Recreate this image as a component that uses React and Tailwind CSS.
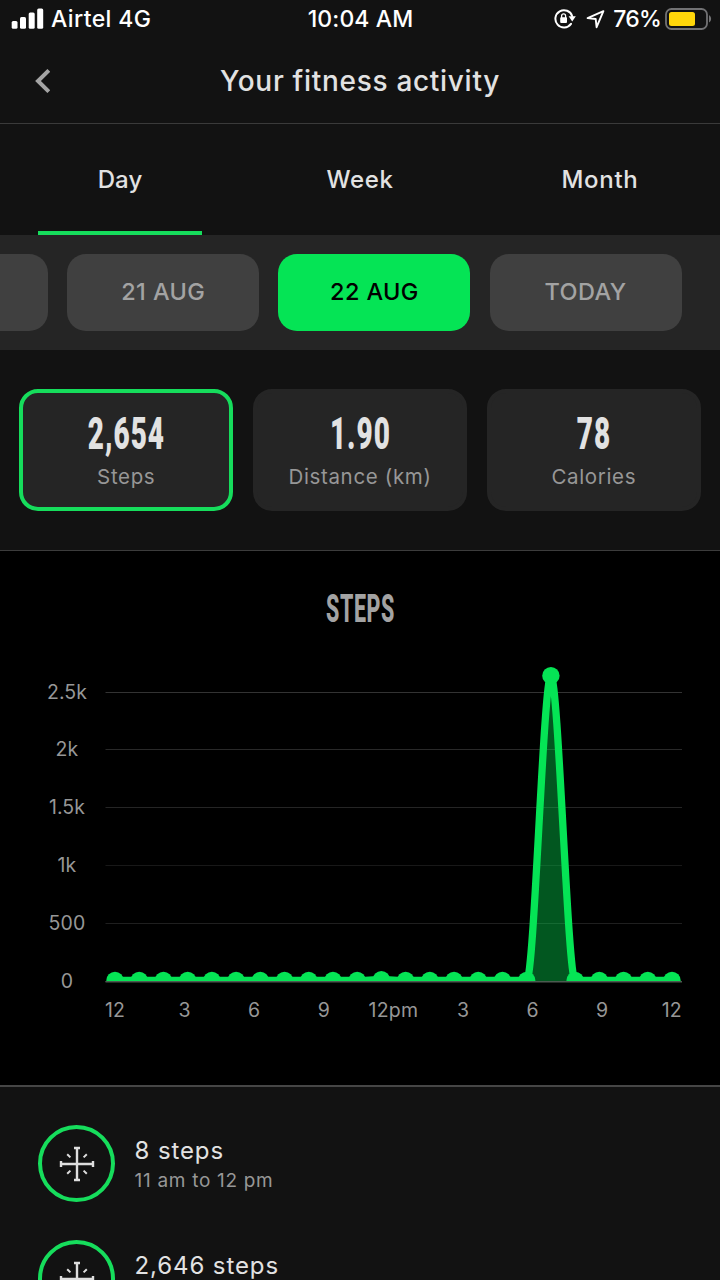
const TABS = [
  { label: 'Day', active: true, tracking: 'tracking-[0.1px]' },
  { label: 'Week', tracking: 'tracking-[0.6px]' },
  { label: 'Month', tracking: 'tracking-[0.7px]' },
];

const DATES = [
  { label: '' },
  { label: '21 AUG' },
  { label: '22 AUG', active: true },
  { label: 'TODAY' },
];

const STATS = [
  { value: '2,654', label: 'Steps', active: true },
  { value: '1.90', label: 'Distance (km)' },
  { value: '78', label: 'Calories' },
];

const ENTRIES = [
  { steps: '8 steps', time: '11 am to 12 pm' },
  { steps: '2,646 steps' },
];

const HOURLY = Array.from({ length: 24 }, (_, i) => (i === 11 ? 8 : i === 18 ? 2646 : 0));
const Y_TICKS = [
  { label: '2.5k', y: 141, stroke: '#333333' },
  { label: '2k', y: 198.5, stroke: '#292929' },
  { label: '1.5k', y: 256.5, stroke: '#252525' },
  { label: '1k', y: 314, stroke: '#181818' },
  { label: '500', y: 372, stroke: '#1f1f1f' },
  { label: '0', y: 430, stroke: '#3c4a40' },
];
const X_TICKS = ['12', '3', '6', '9', '12pm', '3', '6', '9', '12'];

function StatusBar() {
  return (
    <div className="flex h-[38px] items-center justify-between pl-[11px] pr-[8px] text-[23px] font-[450] text-white">
      <div className="flex w-[230px] items-center">
        <svg className="mr-[7px]" width="33" height="22" viewBox="0 0 33 22" fill="#fff">
          <rect x="0.7" y="13.1" width="5.8" height="7.7" rx="1.5" />
          <rect x="9" y="9.1" width="6" height="11.7" rx="1.5" />
          <rect x="17.7" y="4.5" width="6" height="16.3" rx="1.5" />
          <rect x="26.2" y="0.5" width="6" height="20.3" rx="1.5" />
        </svg>
        <span className="tracking-[0.4px]">Airtel 4G</span>
      </div>
      <span className="pr-[2px] tracking-[0.1px]">10:04 AM</span>
      <div className="flex w-[230px] items-center justify-end">
        <svg className="mr-[10px]" width="22" height="20" viewBox="0 0 22 20" fill="none">
          <path d="M17 14.8 A8.6 8.6 0 1 1 18.2 7.2" stroke="#fff" strokeWidth="2" strokeLinecap="round" />
          <path d="M14.6 7.2 H21.8 L18.2 12.4 Z" fill="#fff" />
          <rect x="6.2" y="8.2" width="6.8" height="5.8" rx="0.9" fill="#fff" />
          <path d="M7.6 9 V6.9 A2 2 0 0 1 11.6 6.9 V9" stroke="#fff" strokeWidth="1.3" />
        </svg>
        <svg className="mr-[8px]" width="19" height="20" viewBox="0 0 19 20" fill="none" stroke="#fff" strokeWidth="1.9" strokeLinejoin="round">
          <path d="M17.4 2.2 L1.6 9.1 L9.7 10 L10.6 18.2 Z" />
        </svg>
        <span className="mr-[4px] tracking-[-0.8px]">76%</span>
        <svg width="47" height="22" viewBox="0 0 47 22" fill="none">
          <rect x="1" y="1" width="41" height="20" rx="5.5" stroke="#727274" strokeWidth="1.8" />
          <rect x="4" y="4" width="26" height="14" rx="2.5" fill="#ffd60a" />
          <path d="M44 7.3 C46.8 8.5 46.8 13.3 44 14.5 Z" fill="#727274" />
        </svg>
      </div>
    </div>
  );
}

function Header() {
  return (
    <header className="flex h-[86px] items-center border-b border-[#3a3a3a] px-[35px]">
      <svg width="15" height="24" viewBox="0 0 15 24" fill="none" stroke="#a4a4a4" strokeWidth="4">
        <path d="M13.8 1.4 L3 12 L13.8 22.6" />
      </svg>
      <h1 className="flex-1 text-center text-[28px] font-[450] tracking-[0.7px] text-[#e2e2e2]">Your fitness activity</h1>
      <span className="w-[15px]" />
    </header>
  );
}

function Tabs() {
  return (
    <nav className="grid h-[111px] grid-cols-3">
      {TABS.map((tab) => (
        <div key={tab.label} className={`relative flex items-center justify-center pt-px text-[24px] font-[450] text-[#e2e2e2] ${tab.tracking}`}>
          {tab.label}
          {tab.active && <span className="absolute bottom-0 left-[38px] h-[4px] w-[164px] bg-[#16dd5c]" />}
        </div>
      ))}
    </nav>
  );
}

function DateStrip() {
  return (
    <div className="flex h-[115px] items-center justify-end gap-[19.2px] overflow-hidden bg-[#252525] pr-[38.4px]">
      {DATES.map((d) => (
        <button
          key={d.label}
          className={`h-[77px] w-[192px] shrink-0 rounded-[19px] pb-[2px] text-[23.5px] font-[450] tracking-[0.4px] ${
            d.active ? 'bg-[#05e455] text-black' : 'bg-[#404040] text-[#a3a3a3]'
          }`}
        >
          {d.label}
        </button>
      ))}
    </div>
  );
}

function StatCards() {
  return (
    <section className="grid h-[201px] grid-cols-3 gap-[19.4px] border-b border-[#3c3c3c] px-[19px] pt-[39px]">
      {STATS.map((s) => (
        <div
          key={s.label}
          className={`flex h-[122px] flex-col items-center rounded-[19px] border-4 bg-[#252525] pt-[19px] ${
            s.active ? 'border-[#16dd5c]' : 'border-[#252525]'
          }`}
        >
          <span className="scale-x-[0.62] pl-[1.5px] font-['Roboto'] text-[45px] leading-[44px] font-black tracking-[1.6px] whitespace-nowrap text-[#e2e2e2]">
            {s.value}
          </span>
          <span className="mt-[7px] text-[20.5px] leading-[28px] tracking-[0.65px] text-[#979797]">{s.label}</span>
        </div>
      ))}
    </section>
  );
}

function StepsChart() {
  const x = (i) => 115 + i * (557 / 23);
  const y = (v) => 429.5 - v * 0.1152;
  const bend = (557 / 23) * 0.31;
  const line = HOURLY.map((v, i) => {
    if (i === 0) return `M${x(0)} ${y(v)}`;
    return `C${x(i - 1) + bend} ${y(HOURLY[i - 1])} ${x(i) - bend} ${y(v)} ${x(i)} ${y(v)}`;
  }).join(' ');

  return (
    <section className="h-[536px] border-b-2 border-[#464646] bg-black">
      <div className="flex h-[90px] items-center justify-center pt-[25px]">
        <h2 className="scale-x-[0.55] font-['Roboto'] text-[39px] leading-[40px] font-extrabold tracking-[1px] text-[#a3a3a3]">STEPS</h2>
      </div>
      <svg className="block" width="720" height="444" viewBox="0 90 720 444">
        <defs>
          <clipPath id="plot">
            <rect x="106" y="100" width="575.5" height="330.5" />
          </clipPath>
        </defs>
        {Y_TICKS.map((t) => (
          <g key={t.label}>
            <line x1="105.5" x2="682" y1={Math.floor(t.y) + 0.5} y2={Math.floor(t.y) + 0.5} stroke={t.stroke} />
            <text x="67" y={t.y + 6.5} textAnchor="middle" fontSize="19.5" letterSpacing="0.1" fill="#979797">{t.label}</text>
          </g>
        ))}
        <g clipPath="url(#plot)">
          <path d={`${line} L${x(23)} 430 L${x(0)} 430 Z`} fill="#05e455" fillOpacity="0.38" />
          <path d={line} fill="none" stroke="#05e455" strokeWidth="7.3" />
          {HOURLY.map((v, i) => (
            <circle key={i} cx={x(i)} cy={y(v)} r="8.7" fill="#05e455" />
          ))}
        </g>
        <line x1="105.5" x2="682" y1="430.7" y2="430.7" stroke="#4c5a50" strokeWidth="1.6" />
        {X_TICKS.map((t, i) => (
          <text key={i} x={115 + i * 69.6} y="465.5" textAnchor="middle" fontSize="19.5" letterSpacing="0.2" fill="#979797">{t}</text>
        ))}
      </svg>
    </section>
  );
}

function StepsIcon() {
  return (
    <svg width="36" height="36" viewBox="0 0 36 36" fill="none" stroke="#dedede" strokeWidth="2.4">
      <path d="M18 1.5 V34.5 M1.5 18 H34.5" />
      <path d="M15 2 H21 M15 34 H21 M2 15 V21 M34 15 V21" />
      <path d="M8.2 8.2 L11.4 11.4 M27.8 8.2 L24.6 11.4 M8.2 27.8 L11.4 24.6 M27.8 27.8 L24.6 24.6" strokeWidth="2" />
    </svg>
  );
}

function EntryList() {
  return (
    <section className="flex flex-col gap-[39px] pt-[38px] pl-[38px]">
      {ENTRIES.map((e) => (
        <div key={e.steps} className="flex h-[76px] shrink-0 gap-[19.5px]">
          <div className="flex size-[77px] shrink-0 items-center justify-center rounded-full border-4 border-[#16dd5c]">
            <StepsIcon />
          </div>
          <div className="pt-[10px]">
            <div className="text-[24px] leading-[31px] tracking-[0.9px] text-[#e2e2e2]">{e.steps}</div>
            {e.time && <div className="pt-px text-[19px] leading-[28px] tracking-[0.7px] text-[#979797]">{e.time}</div>}
          </div>
        </div>
      ))}
    </section>
  );
}

export default function App() {
  return (
    <div className="h-[1280px] w-[720px] overflow-hidden bg-[#121212] font-['Inter',sans-serif]">
      <StatusBar />
      <Header />
      <Tabs />
      <DateStrip />
      <StatCards />
      <StepsChart />
      <EntryList />
    </div>
  );
}
